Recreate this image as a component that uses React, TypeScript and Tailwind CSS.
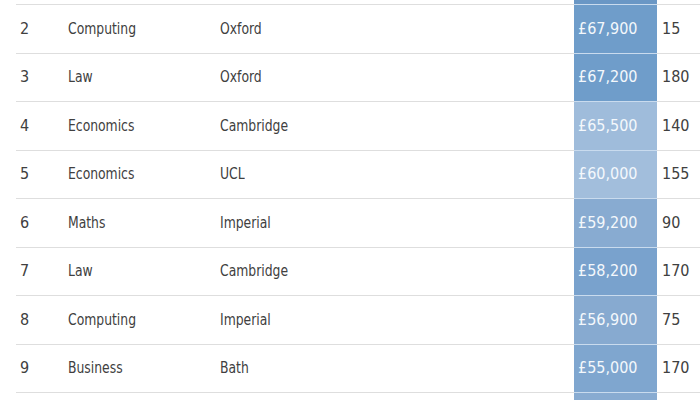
const rows = [
  { rank: 2, subject: 'Computing', uni: 'Oxford', salary: '£67,900', count: '15', bg: 'bg-[#6f9dca]' },
  { rank: 3, subject: 'Law', uni: 'Oxford', salary: '£67,200', count: '180', bg: 'bg-[#6f9dca]' },
  { rank: 4, subject: 'Economics', uni: 'Cambridge', salary: '£65,500', count: '140', bg: 'bg-[#9fbcdb]' },
  { rank: 5, subject: 'Economics', uni: 'UCL', salary: '£60,000', count: '155', bg: 'bg-[#a2bedc]' },
  { rank: 6, subject: 'Maths', uni: 'Imperial', salary: '£59,200', count: '90', bg: 'bg-[#88abd1]' },
  { rank: 7, subject: 'Law', uni: 'Cambridge', salary: '£58,200', count: '170', bg: 'bg-[#79a2cd]' },
  { rank: 8, subject: 'Computing', uni: 'Imperial', salary: '£56,900', count: '75', bg: 'bg-[#87aad0]' },
  { rank: 9, subject: 'Business', uni: 'Bath', salary: '£55,000', count: '170', bg: 'bg-[#7fa6cf]' },
];

const cell = 'flex items-center border-b-[1.5px] border-[#dedede]';

function Word({ children }: { children: string }) {
  return <span className="inline-block origin-left scale-x-[0.86] whitespace-nowrap">{children}</span>;
}

export default function App() {
  return (
    <div
      className="w-[700px] h-[400px] overflow-hidden bg-white text-[#404040] text-[16px]"
      style={{ fontFamily: '"DejaVu Sans Condensed", "Liberation Sans", sans-serif' }}
    >
      <div className="pl-[16px]">
        {/* tail of the row above, only the salary bar shows */}
        <div className="grid grid-cols-[48px_152px_358px_83px_1fr] h-[5px]">
          <div className="col-span-3 border-b-[1.5px] border-[#dedede]" />
          <div className="bg-[#6a97c5] border-b-[1.5px] border-[#c9dbee]" />
          <div className="border-b-[1.5px] border-[#dedede]" />
        </div>

        {rows.map((r) => (
          <div key={r.rank} className="grid grid-cols-[48px_152px_358px_83px_1fr] h-[48.5px]">
            <div className={`${cell} pl-[4px]`}>{r.rank}</div>
            <div className={`${cell} pl-[4px]`}>
              <Word>{r.subject}</Word>
            </div>
            <div className={`${cell} pl-[4px]`}>
              <Word>{r.uni}</Word>
            </div>
            <div className={`flex items-center pl-[4px] text-[#f4f8fc] border-b-[1.5px] border-[#c9dbee] ${r.bg}`}>
              {r.salary}
            </div>
            <div className={`${cell} pl-[5px]`}>{r.count}</div>
          </div>
        ))}

        {/* top of the next row */}
        <div className="grid grid-cols-[48px_152px_358px_83px_1fr] h-[10px]">
          <div className="col-span-3" />
          <div className="bg-[#88abd1]" />
          <div />
        </div>
      </div>
    </div>
  );
}
